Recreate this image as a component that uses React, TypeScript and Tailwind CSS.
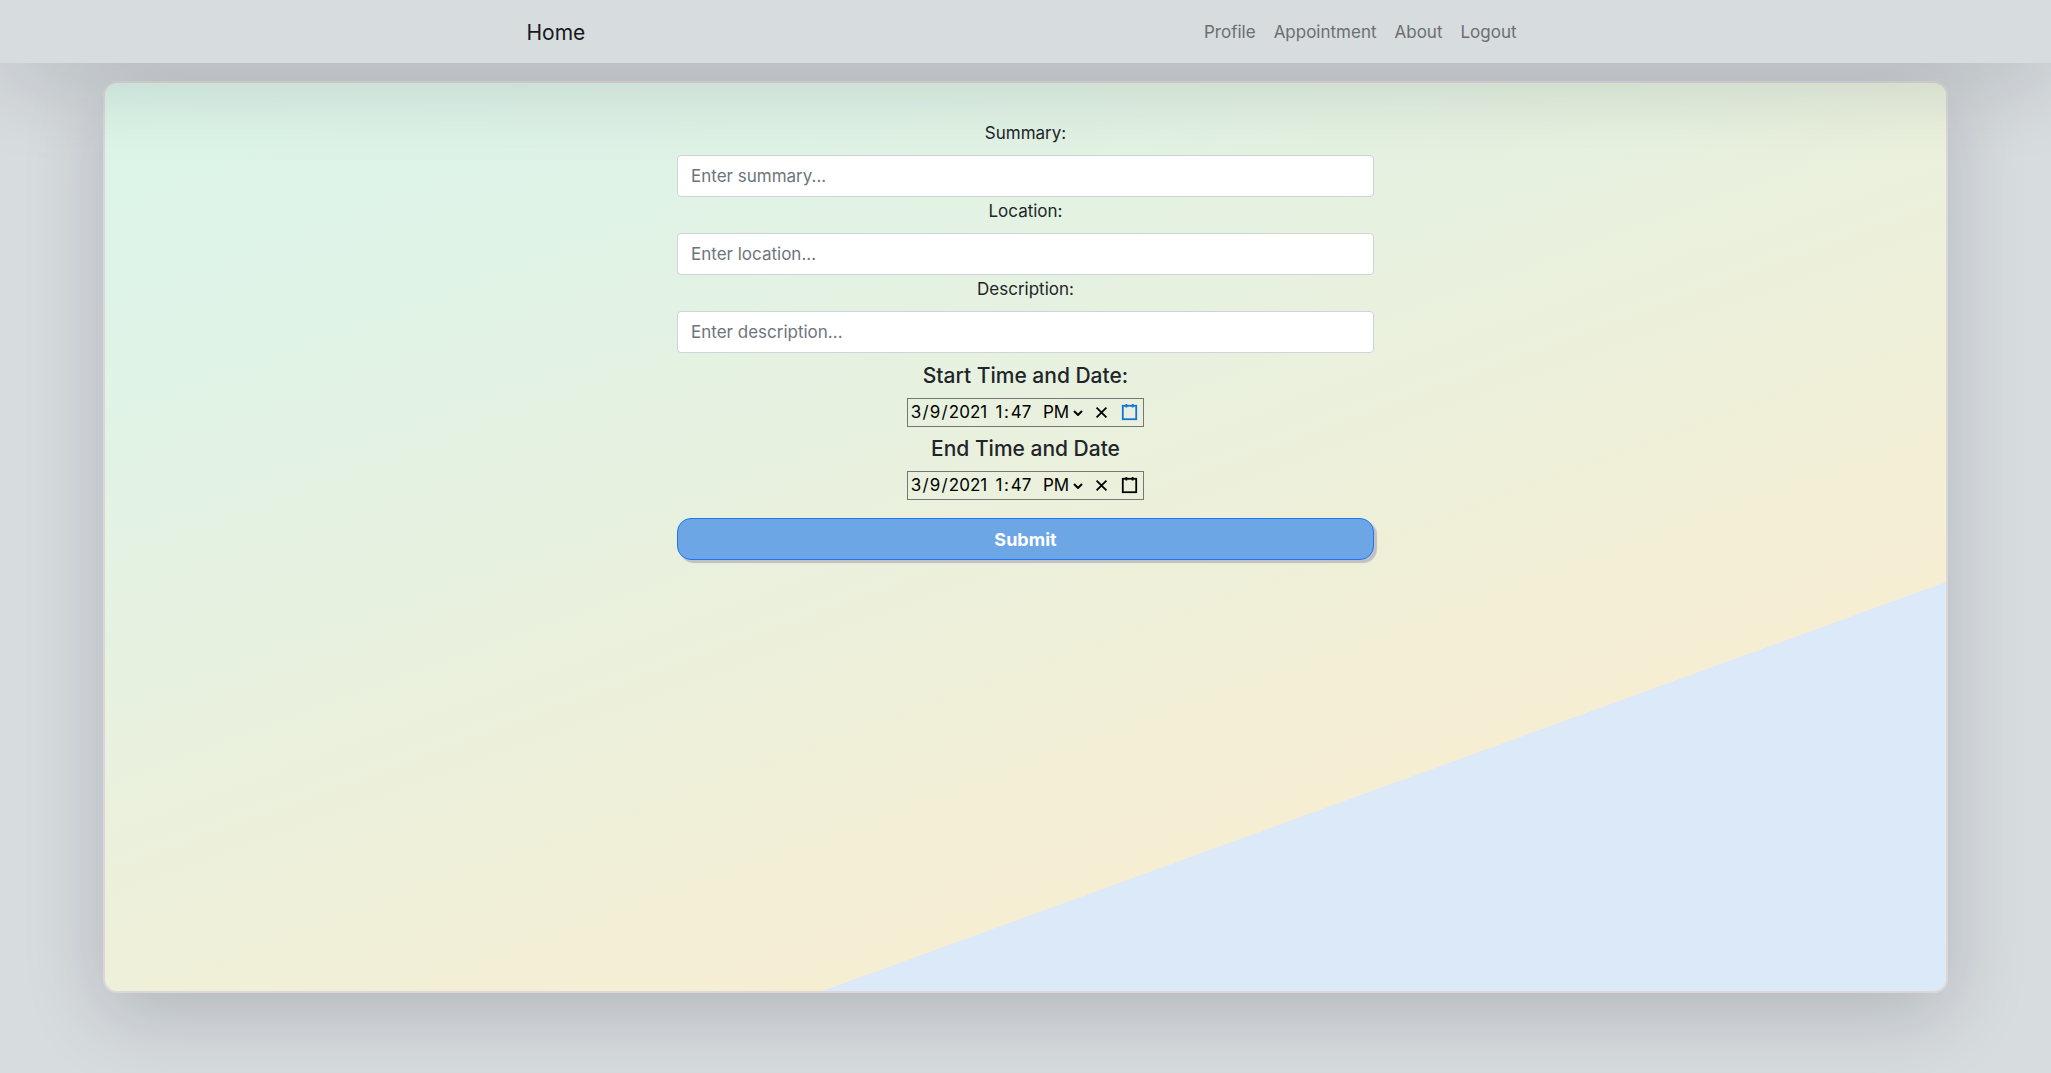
import React from "react";

const links = ["Profile", "Appointment", "About", "Logout"];
const fields = [
  { id: "summary", label: "Summary:", hint: "Enter summary..." },
  { id: "location", label: "Location:", hint: "Enter location..." },
  { id: "description", label: "Description:", hint: "Enter description..." },
];

const part = "bg-transparent p-0 text-center outline-none";

function DateTimePicker({ name, iconClass }: { name: string; iconClass: string }) {
  return (
    <div
      role="group"
      aria-label={name}
      className="mx-auto flex h-[29px] w-[237px] items-center border border-[#767676] pl-0.5 text-[17px] text-black"
    >
      <input aria-label="Month" defaultValue="3" className={`${part} w-3`} />
      <span className="w-[7px] text-center">/</span>
      <input aria-label="Day" defaultValue="9" className={`${part} w-3`} />
      <span className="w-[7px] text-center">/</span>
      <input aria-label="Year" defaultValue="2021" className={`${part} w-10`} />
      <input aria-label="Hour" defaultValue="1" className={`${part} ml-1.5 w-2.5`} />
      <span className="w-[5px] text-center">:</span>
      <input aria-label="Minute" defaultValue="47" className={`${part} w-6`} />
      <span className="relative ml-2.5 flex items-center">
        <select aria-label="AM or PM" defaultValue="PM" className="w-10 appearance-none bg-transparent p-0 outline-none">
          <option>AM</option>
          <option>PM</option>
        </select>
        <svg viewBox="0 0 10 6" className="pointer-events-none absolute right-0 h-1.5 w-2.5" fill="none" stroke="currentColor" strokeWidth="2">
          <path d="M1 1l4 4 4-4" />
        </svg>
      </span>
      <button type="button" aria-label="Clear" className="ml-auto flex w-7 justify-center">
        <svg width="17" height="17" viewBox="0 0 19 19" stroke="currentColor" strokeWidth="2">
          <path d="M4 4L15 15M15 4L4 15" />
        </svg>
      </button>
      <button type="button" aria-label="Open calendar" className={`flex w-[27px] justify-center ${iconClass}`}>
        <svg width="17" height="17" viewBox="0 0 19 19" fill="none" stroke="currentColor" strokeWidth="2">
          <rect x="2" y="2" width="15" height="15" />
          <path d="M6 0V4M13 0V4" />
        </svg>
      </button>
    </div>
  );
}

export default function App() {
  return (
    <div className="min-h-screen overflow-hidden bg-[#d7dcdf] font-['Inter',sans-serif] text-[17px] text-[#212529]">
      <nav className="relative z-10 bg-[#d7dcdf] shadow-[0_20px_80px_rgba(10,15,25,0.17)]">
        <div className="mx-auto flex h-[63px] max-w-[998px] items-center justify-between pt-0.5 pr-2">
          <a href="#home" className="text-[21px] text-[#161a1b]">Home</a>
          <ul className="flex gap-[18px] text-[#6b6f70]">
            {links.map((l) => (
              <li key={l}>
                <a href={`#${l.toLowerCase()}`}>{l}</a>
              </li>
            ))}
          </ul>
        </div>
      </nav>

      <main className="mx-auto mt-[18px] min-h-[85vh] w-[90%] rounded-[14px] border-2 border-[#ddd6d8] bg-[linear-gradient(160deg,#dcf4e9_0%,#dff3e6_20%,#f6eed3_74%,#dbe9f8_74%)] bg-origin-border pt-9 shadow-[0_20px_80px_rgba(10,15,25,0.19)]">
        <form className="mx-auto max-w-[697px]" onSubmit={(e) => e.preventDefault()}>
          {fields.map((f) => (
            <div key={f.id}>
              <label htmlFor={f.id} className="mb-2 block text-center leading-7">
                {f.label}
              </label>
              <input
                id={f.id}
                placeholder={f.hint}
                className="block h-[42px] w-full rounded border border-[#ced4da] bg-white px-[13px] placeholder:text-[#6c757d]"
              />
            </div>
          ))}
          <h2 className="mt-[9px] mb-2 text-center text-[21px] leading-7 font-medium">Start Time and Date:</h2>
          <DateTimePicker name="Start time and date" iconClass="text-[#1173dc]" />
          <h2 className="mt-2 mb-2 text-center text-[21px] leading-7 font-medium">End Time and Date</h2>
          <DateTimePicker name="End time and date" iconClass="text-black" />
          <button
            type="submit"
            className="mt-[18px] block h-[42px] w-full rounded-[14px] border border-[#1f75f5] bg-[#6ca6e5] text-[18px] font-bold text-white shadow-[3px_3px_1px_#bfc1c3]"
          >
            Submit
          </button>
        </form>
      </main>
    </div>
  );
}
